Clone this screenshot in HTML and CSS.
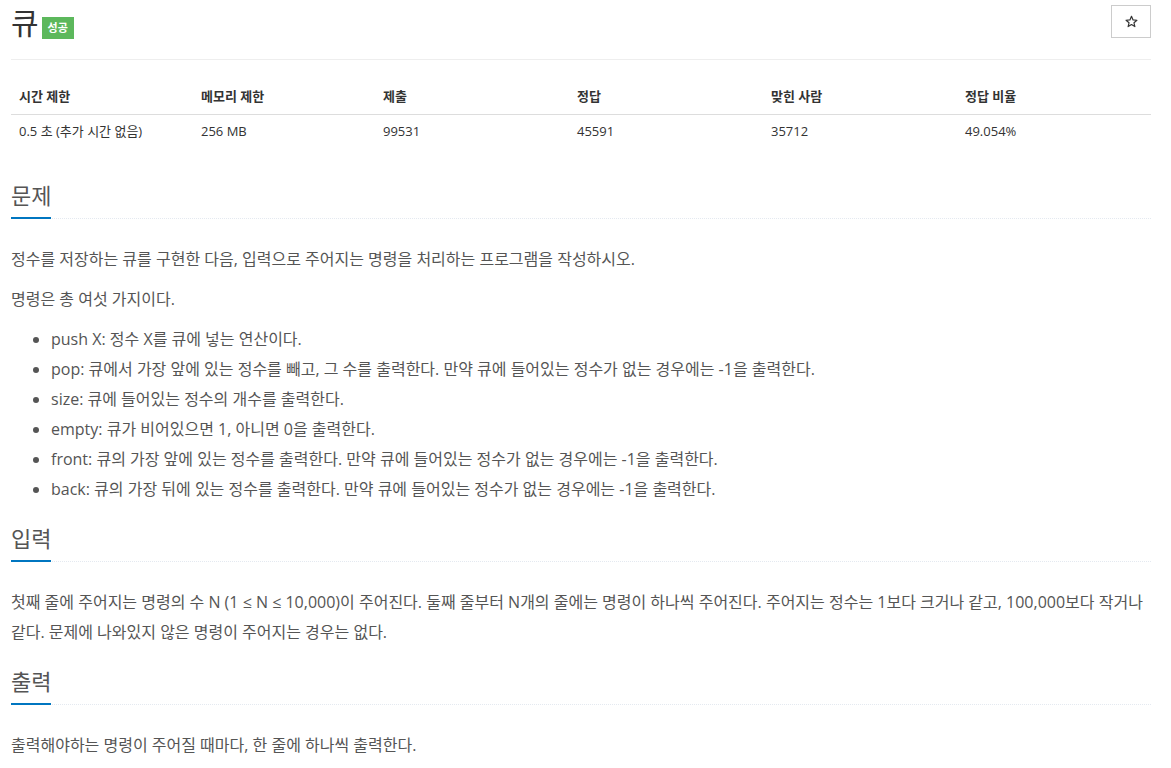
FILE: index.html
```html
<!DOCTYPE html>
<html lang="ko">
<head>
  <meta charset="UTF-8">
  <title>큐</title>
<link rel="stylesheet" href="styles.css">
</head>
<body>
<div class="container">

	<div class="page-header">
		<h1 class="title">큐 <span class="label-success">성공</span></h1>
		<button class="star-btn" type="button" title="즐겨찾기">
			<svg width="13" height="13" viewBox="0 0 24 24"><path d="M12 2.5l2.9 6.6 7.1.6-5.4 4.7 1.6 7-6.2-3.7-6.2 3.7 1.6-7L2 9.7l7.1-.6z" fill="none" stroke="#333" stroke-width="2.2" stroke-linejoin="round"/></svg>
		</button>
	</div>

	<table class="info">
		<thead>
			<tr>
				<th class="narrow">시간 제한</th>
				<th class="narrow">메모리 제한</th>
				<th>제출</th>
				<th>정답</th>
				<th>맞힌 사람</th>
				<th>정답 비율</th>
			</tr>
		</thead>
		<tbody>
			<tr>
				<td>0.5 초 (추가 시간 없음)</td>
				<td>256 MB</td>
				<td>99531</td>
				<td>45591</td>
				<td>35712</td>
				<td>49.054%</td>
			</tr>
		</tbody>
	</table>

	<section class="problem">
		<div class="headline"><h2>문제</h2></div>
		<p>정수를 저장하는 큐를 구현한 다음, 입력으로 주어지는 명령을 처리하는 프로그램을 작성하시오.</p>
		<p>명령은 총 여섯 가지이다.</p>
		<ul>
			<li>push X: 정수 X를 큐에 넣는 연산이다.</li>
			<li>pop: 큐에서 가장 앞에 있는 정수를 빼고, 그 수를 출력한다. 만약 큐에 들어있는 정수가 없는 경우에는 -1을 출력한다.</li>
			<li>size: 큐에 들어있는 정수의 개수를 출력한다.</li>
			<li>empty: 큐가 비어있으면 1, 아니면 0을 출력한다.</li>
			<li>front: 큐의 가장 앞에 있는 정수를 출력한다. 만약 큐에 들어있는 정수가 없는 경우에는 -1을 출력한다.</li>
			<li>back: 큐의 가장 뒤에 있는 정수를 출력한다. 만약 큐에 들어있는 정수가 없는 경우에는 -1을 출력한다.</li>
		</ul>
	</section>

	<section class="problem">
		<div class="headline"><h2>입력</h2></div>
		<p>첫째 줄에 주어지는 명령의 수 N (1 ≤ N ≤ 10,000)이 주어진다. 둘째 줄부터 N개의 줄에는 명령이 하나씩 주어진다. 주어지는 정수는 1보다 크거나 같고, 100,000보다 작거나 같다. 문제에 나와있지 않은 명령이 주어지는 경우는 없다.</p>
	</section>

	<section class="problem">
		<div class="headline"><h2>출력</h2></div>
		<p>출력해야하는 명령이 주어질 때마다, 한 줄에 하나씩 출력한다.</p>
	</section>

</div>
</body>
</html>
```

FILE: styles.css
```css
body{
	margin: 0;
	font-family: "Open Sans", "Noto Sans CJK KR", sans-serif;
	font-size: 13px;
	color: #555;
	background: #fff;
}

.container{
	padding: 0 20px 0 11px;
}

/* header */
.page-header{
	display: flex;
	justify-content: space-between;
	align-items: flex-start;
	padding-top: 5px;
	height: 54px;
	border-bottom: 1px solid #eee;
}
.title{
	display: flex;
	align-items: flex-start;
	margin: 0;
	font-size: 30px;
	font-weight: 400;
	line-height: 36px;
	color: #333;
}
.label-success{
	display: inline-block;
	margin: 12px 0 0 3px;
	height: 22px;
	padding: 0 6px;
	line-height: 22px;
	font-size: 11px;
	font-weight: 700;
	color: #fff;
	background: #5cb85c;
}
.star-btn{
	width: 40px;
	height: 33px;
	padding: 0;
	display: flex;
	align-items: center;
	justify-content: center;
	background: #fff;
	border: 1px solid #ccc;
}

/* info table */
.info{
	width: 100%;
	table-layout: fixed;
	border-collapse: collapse;
	margin: 18px 0 30px;
	color: #333;
}
.info th, .info td{
	box-sizing: border-box;
	text-align: left;
	padding: 8px;
	line-height: 20px;
}
.info td{
	padding-top: 6px;
}
.info th{
	width: 194px;
	font-weight: 700;
	border-bottom: 1px solid #ddd;
}
.info th.narrow{
	width: 182px;
}

/* sections */
.headline{
	margin: 18px 0 25px;
	border-bottom: 1px dotted #e4e9f0;
}
.headline h2{
	display: inline-block;
	margin: 0 0 -1px;
	padding-bottom: 5px;
	font-size: 22px;
	font-weight: 400;
	line-height: 33px;
	color: #555;
	border-bottom: 2px solid #0076c0;
}
.problem p{
	margin: 0 0 10px;
	font-size: 16px;
	line-height: 30px;
}
.problem ul{
	margin: 0 0 10px;
	padding-left: 40px;
	font-size: 16px;
	line-height: 30px;
}
```
